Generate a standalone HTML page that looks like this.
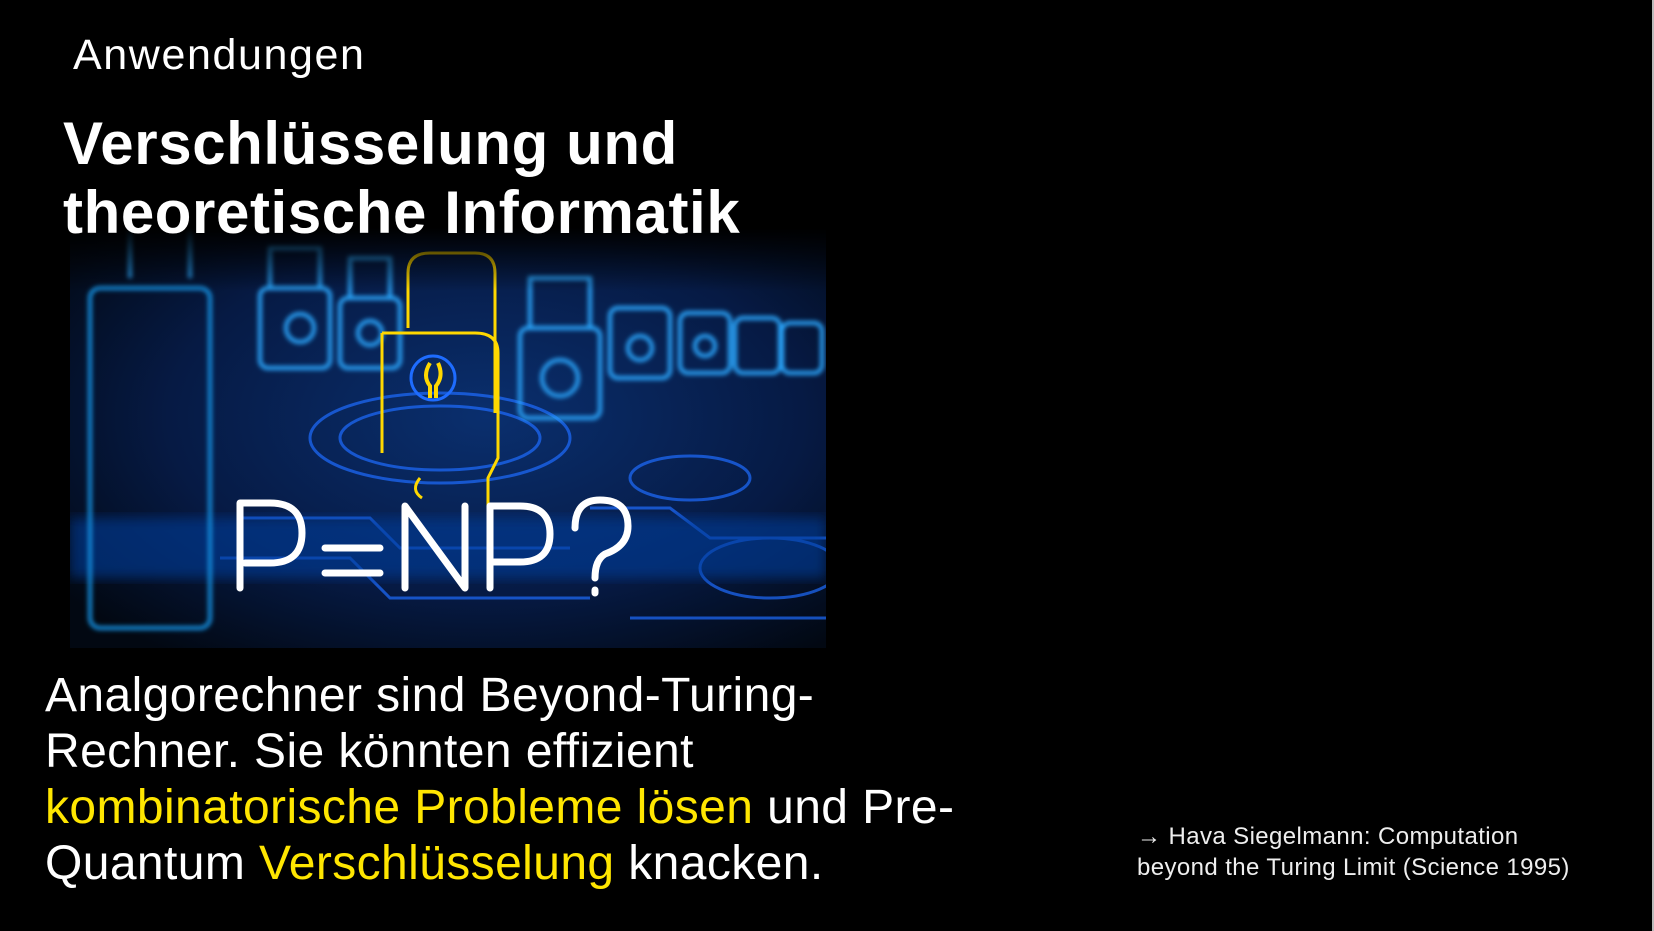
<!DOCTYPE html>
<html><head><meta charset="utf-8"><style>
html,body{margin:0;padding:0;background:#000;}
body{width:1654px;height:931px;position:relative;overflow:hidden;font-family:"Liberation Sans",sans-serif;color:#fff;}
.edge-r{position:absolute;right:0;top:0;width:2px;height:931px;background:#bbb;}
.t1{position:absolute;left:73px;top:30px;font-size:43px;line-height:50px;letter-spacing:1.6px;}
.t2{position:absolute;left:63px;top:109px;font-size:60px;line-height:69px;font-weight:bold;letter-spacing:0.6px;z-index:2;}
.img{position:absolute;left:70px;top:228px;width:756px;height:420px;}
.body{position:absolute;left:45px;top:668px;font-size:48px;line-height:56px;letter-spacing:0.4px;width:1000px;}
.y{color:#ffe600;}
.cite{position:absolute;left:1137px;top:821px;font-size:24px;line-height:31px;letter-spacing:0.4px;color:#eee;}
</style></head><body>
<div class="edge-r"></div>
<div class="t1">Anwendungen</div>
<div class="t2">Verschlüsselung und<br>theoretische Informatik</div>
<svg class="img" viewBox="0 0 756 420" xmlns="http://www.w3.org/2000/svg">
<defs>
<linearGradient id="fade" x1="0" y1="0" x2="0" y2="1">
<stop offset="0" stop-color="#000" stop-opacity="1"/><stop offset="0.15" stop-color="#000" stop-opacity="0"/></linearGradient>
<radialGradient id="bg" cx="0.55" cy="0.45" r="0.7">
<stop offset="0" stop-color="#0a2f6e"/><stop offset="0.6" stop-color="#061a44"/><stop offset="1" stop-color="#020812"/></radialGradient>
<filter id="gl"><feGaussianBlur stdDeviation="2.5"/></filter>
<filter id="bl"><feGaussianBlur stdDeviation="6"/></filter>
</defs>
<rect width="756" height="420" fill="url(#bg)"/>
<g stroke="#1e6cff" stroke-width="3" fill="none" opacity="0.7">
<ellipse cx="370" cy="210" rx="130" ry="45"/><ellipse cx="370" cy="210" rx="100" ry="32"/>
<ellipse cx="700" cy="340" rx="70" ry="30"/><ellipse cx="620" cy="250" rx="60" ry="22"/>
<path d="M170 290 L300 290 L330 320 L500 320 M150 330 L280 330 L320 370 L520 370 M520 280 L600 280 L640 310 L756 310 M560 390 L756 390"/>
</g>
<g filter="url(#bl)">
<rect x="0" y="290" width="756" height="60" fill="#0a3a9a" opacity="0.6"/>
</g>
<g fill="none" stroke="#29a8ff" stroke-width="4" filter="url(#gl)">
<rect x="20" y="60" width="120" height="340" rx="10" stroke="#1590e0"/>
<path d="M60 50 V0 M120 50 V0"/>
<rect x="190" y="60" width="70" height="80" rx="8"/><path d="M200 60 V20 H250 V60"/>
<rect x="270" y="70" width="60" height="70" rx="8"/><path d="M280 70 V30 H320 V70"/>
<rect x="450" y="100" width="80" height="90" rx="8"/><path d="M460 100 V50 H520 V100"/>
<rect x="540" y="80" width="60" height="70" rx="8"/><rect x="610" y="85" width="50" height="60" rx="8"/><rect x="665" y="90" width="45" height="55" rx="8"/><rect x="712" y="95" width="40" height="50" rx="8"/>
<circle cx="230" cy="100" r="14"/><circle cx="300" cy="105" r="12"/><circle cx="490" cy="150" r="18"/><circle cx="570" cy="120" r="12"/><circle cx="635" cy="118" r="10"/>
</g>
<g fill="none" stroke="#ffd800" stroke-width="3">
<path d="M338 100 V45 Q338 25 360 25 H405 Q425 25 425 45 V185"/>
<path d="M312 105 H405 Q428 105 428 125 V230 L418 250 V290"/>
<path d="M312 105 V225"/>
<circle cx="363" cy="150" r="22" stroke="#1e6cff"/>
<path d="M360 135 Q352 148 360 158 V170 M368 135 Q374 148 366 158 V170" stroke-width="4"/>
<path d="M350 250 Q340 262 352 270"/>
</g>
<g fill="none" stroke="#fff" stroke-width="7" stroke-linecap="round" stroke-linejoin="round">
<path d="M170 360 V275 H200 Q232 275 232 305 Q232 335 200 335 H175"/>
<path d="M255 320 H310 M255 345 H310"/>
<path d="M335 360 V278 L395 360 V278"/>
<path d="M420 360 V278 H450 Q480 278 480 306 Q480 334 450 334 H422"/>
<path d="M505 300 Q505 272 530 272 Q558 272 558 298 Q558 318 535 326 Q525 332 525 350 M525 362 V365"/>
</g>
<rect width="756" height="420" fill="url(#fade)"/>
</svg>
<div class="body">Analgorechner sind Beyond-Turing-<br>Rechner. Sie könnten effizient<br><span class="y">kombinatorische Probleme lösen</span> und Pre-<br>Quantum <span class="y">Verschlüsselung</span> knacken.</div>
<div class="cite">→ Hava Siegelmann: Computation<br>beyond the Turing Limit (Science 1995)</div>
</body></html>
